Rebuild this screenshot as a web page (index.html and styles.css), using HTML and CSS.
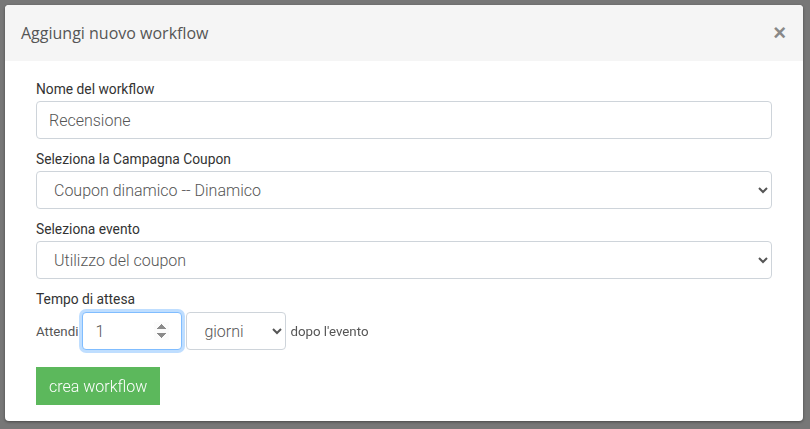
FILE: index.html
```html
<!DOCTYPE html>
<html lang="it">
<head>
  <meta charset="UTF-8">
  <meta name="viewport" content="width=device-width, initial-scale=1.0">
  <title>Aggiungi nuovo workflow</title>
  <link rel="stylesheet" href="styles.css">
</head>
<body>

  <!-- Modal -->
  <div class="modal">
    <div class="modal-header">
      <h4 class="modal-title">Aggiungi nuovo workflow</h4>
      <button class="close" type="button">&times;</button>
    </div>

    <div class="modal-body">
      <div class="form-group">
        <label>Nome del workflow</label>
        <input class="form-control" type="text" value="Recensione">
      </div>

      <div class="form-group">
        <label>Seleziona la Campagna Coupon</label>
        <select class="form-control">
          <option>Coupon dinamico -- Dinamico</option>
        </select>
      </div>

      <div class="form-group">
        <label>Seleziona evento</label>
        <select class="form-control">
          <option>Utilizzo del coupon</option>
        </select>
      </div>

      <div class="form-group wait">
        <label>Tempo di attesa</label>
        <div class="wait-row">
          <span>Attendi</span>
          <input class="form-control small" type="number" value="1" autofocus>
          <select class="form-control small">
            <option>giorni</option>
          </select>
          <span>dopo l'evento</span>
        </div>
      </div>

      <button class="btn-success" type="button">crea workflow</button>
    </div>
  </div>

</body>
</html>
```

FILE: styles.css
```css
body {
  margin: 0;
  padding: 5px;
  background-color: #777;
  font-family: Roboto, "Liberation Sans", sans-serif;
  height: 429px;
  box-sizing: border-box;
  overflow: hidden;
}

.modal {
  width: 798px;
  background-color: #fff;
  border-radius: 4px;
  overflow: hidden;
  box-shadow: 0 1px 3px rgba(0, 0, 0, 0.4);
}

.modal-header {
  display: flex;
  align-items: center;
  justify-content: space-between;
  height: 56px;
  padding: 0 16px;
  background-color: #f5f5f5;
}

.modal-title {
  margin: 0;
  font-family: "Open Sans", sans-serif;
  font-size: 16px;
  font-weight: normal;
  color: #555;
}

.close {
  border: none;
  background: none;
  padding: 0;
  font-family: "Liberation Sans", sans-serif;
  font-size: 22px;
  font-weight: bold;
  color: #888;
  margin-right: 1px;
}

.modal-body {
  padding: 20px 31px 16px;
}

.form-group {
  margin-bottom: 12px;
}

label {
  display: block;
  font-size: 13.8px;
  line-height: 17px;
  color: #333;
  margin-bottom: 3px;
}

.form-control {
  display: block;
  width: 100%;
  height: 38px;
  box-sizing: border-box;
  padding: 0 12px;
  font-family: Roboto, sans-serif;
  font-size: 16px;
  font-weight: 300;
  color: #555;
  background-color: #fff;
  border: 1px solid #ced4da;
  border-radius: 4px;
  outline: none;
}

select.form-control {
  padding-left: 13px;
}

.wait-row {
  display: flex;
  align-items: center;
  gap: 4px;
  margin-top: 4px;
  font-size: 13.3px;
  color: #555;
}

.form-control.small {
  width: 100px;
}

input[type="number"].form-control:focus {
  border-color: #80bdff;
  box-shadow: 0 0 0 3px rgba(0, 123, 255, 0.25);
}

.wait {
  margin-bottom: 17px;
}

.btn-success {
  height: 38px;
  padding: 0 13px;
  border: none;
  background-color: #5cb85c;
  color: #fff;
  font-family: Roboto, sans-serif;
  font-size: 16px;
  font-weight: 300;
}
```
